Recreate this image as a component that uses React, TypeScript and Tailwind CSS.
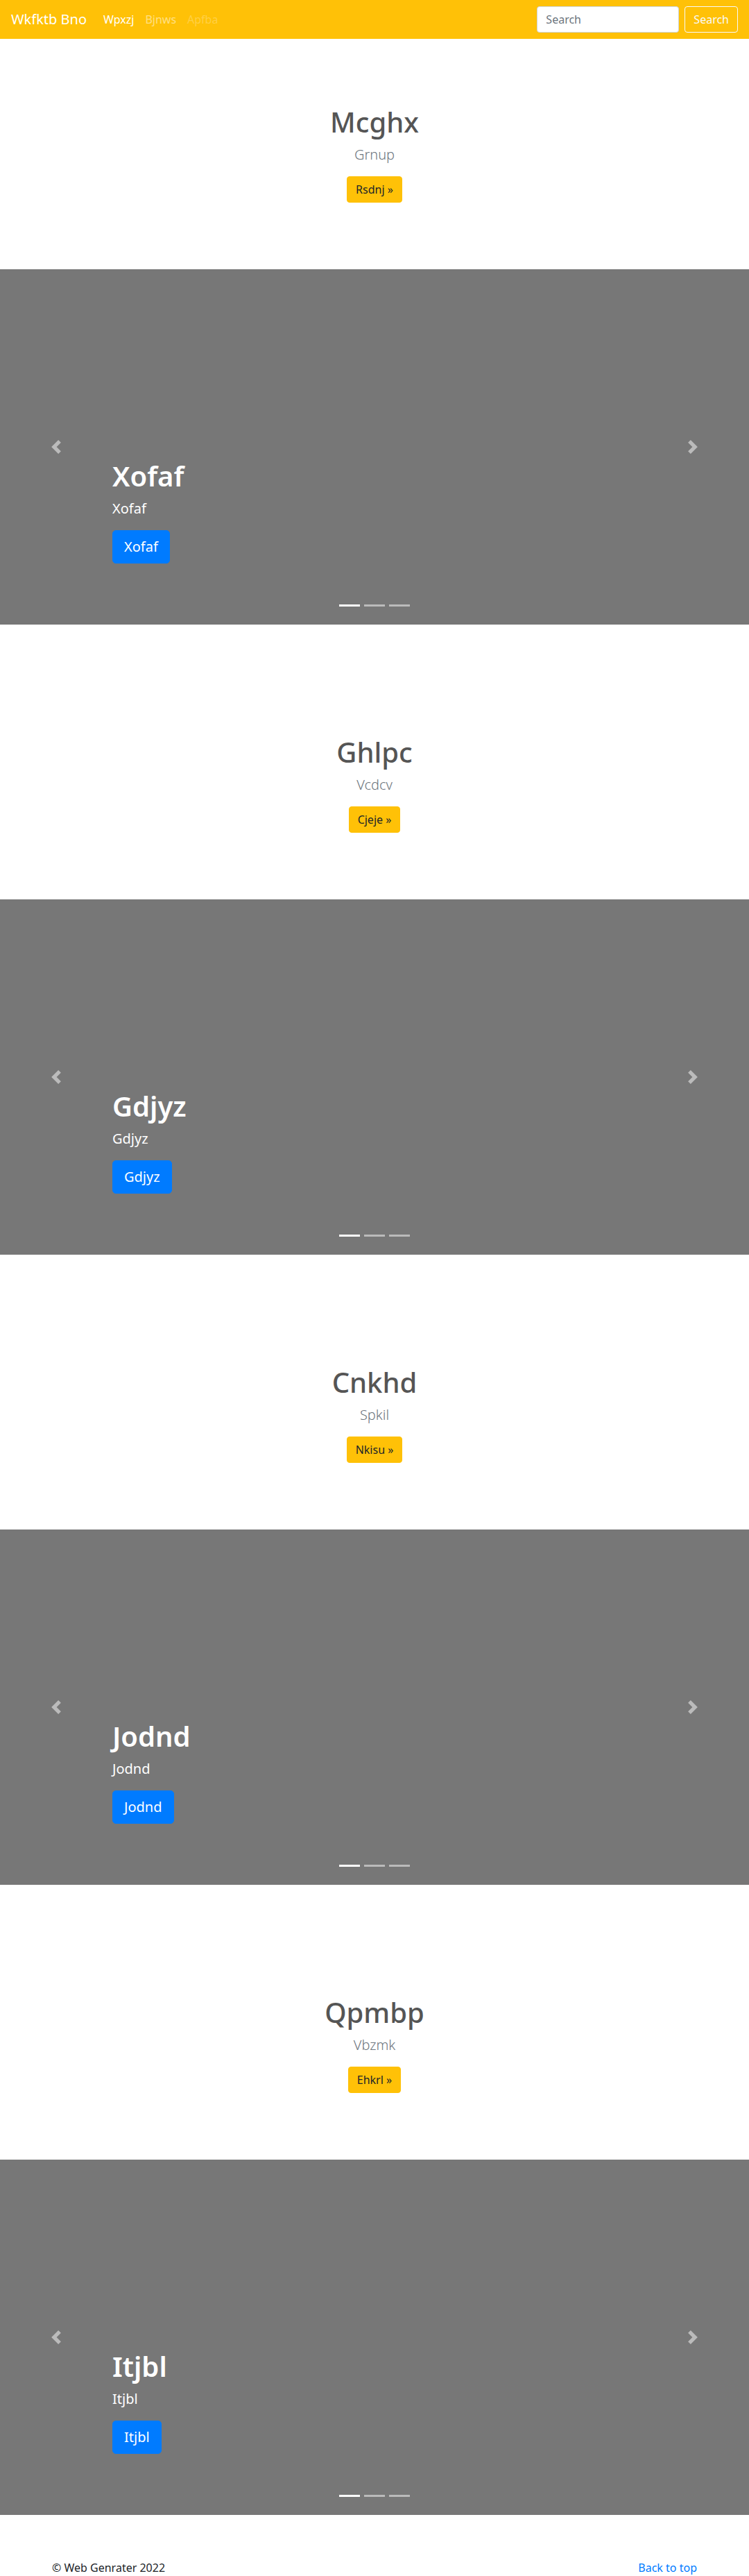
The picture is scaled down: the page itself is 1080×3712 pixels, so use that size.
const font = { fontFamily: '"Noto Sans", "Open Sans", Arial, sans-serif' };

const sections = [
  { title: "Mcghx", lead: "Grnup", cta: "Rsdnj", slide: "Xofaf" },
  { title: "Ghlpc", lead: "Vcdcv", cta: "Cjeje", slide: "Gdjyz" },
  { title: "Cnkhd", lead: "Spkil", cta: "Nkisu", slide: "Jodnd" },
  { title: "Qpmbp", lead: "Vbzmk", cta: "Ehkrl", slide: "Itjbl" },
];

function Navbar() {
  return (
    <nav className="flex h-14 items-center bg-[#ffc107] px-4">
      <a href="#" className="mr-4 py-[5px] text-[20px] leading-[30px] text-white">
        Wkfktb Bno
      </a>
      <ul className="flex items-center text-[16px] leading-6">
        <li>
          <a href="#" className="block px-2 py-2 text-white">
            Wpxzj
          </a>
        </li>
        <li>
          <a href="#" className="block px-2 py-2 text-white/50">
            Bjnws
          </a>
        </li>
        <li>
          <span className="block px-2 py-2 text-white/25">Apfba</span>
        </li>
      </ul>
      <form className="ml-auto flex items-center gap-2" onSubmit={(e) => e.preventDefault()}>
        <input
          type="text"
          placeholder="Search"
          className="h-[38px] w-[205px] rounded border border-[#ced4da] bg-white px-3 text-[16px] text-[#495057] placeholder:text-[#6c757d] outline-none"
        />
        <button
          type="submit"
          className="h-[38px] rounded border border-[#f8f9fa] px-3 text-[16px] text-[#f8f9fa]"
        >
          Search
        </button>
      </form>
    </nav>
  );
}

function Hero({ title, lead, cta }: { title: string; lead: string; cta: string }) {
  return (
    <section className="bg-white py-24 text-center">
      <h1 className="mb-2 text-[40px] font-medium leading-[48px] text-[#555]">{title}</h1>
      <p className="mb-4 text-[20px] font-light leading-[30px] text-[#6c757d]">{lead}</p>
      <p>
        <a
          href="#"
          className="inline-block rounded border border-[#ffc107] bg-[#ffc107] px-3 py-1.5 text-[16px] leading-6 text-[#212529]"
        >
          {cta} »
        </a>
      </p>
    </section>
  );
}

function Chevron({ dir }: { dir: "prev" | "next" }) {
  const d =
    dir === "prev"
      ? "M5.25 0l-4 4 4 4 1.5-1.5L4.25 4l2.5-2.5L5.25 0z"
      : "M2.75 0l-1.5 1.5L3.75 4l-2.5 2.5L2.75 8l4-4-4-4z";
  return (
    <svg width="20" height="20" viewBox="0 0 8 8" className="opacity-50">
      <path d={d} fill="#fff" />
    </svg>
  );
}

function Carousel({ label }: { label: string }) {
  return (
    <div className="relative mb-16 h-[512px] bg-[#777]">
      <div className="absolute bottom-[88px] left-[15%] right-[15%] text-left text-white">
        <h1 className="mb-2 text-[40px] font-semibold leading-[48px]">{label}</h1>
        <p className="mb-4 text-[20px] leading-[30px]">{label}</p>
        <p>
          <a
            href="#"
            className="inline-block rounded-[5px] border border-[#007bff] bg-[#007bff] px-4 py-2 text-[20px] leading-[30px] text-white"
          >
            {label}
          </a>
        </p>
      </div>
      <ol className="absolute bottom-[26px] left-0 right-0 flex justify-center">
        {[0, 1, 2].map((i) => (
          <li key={i} className={`mx-[3px] h-[3px] w-[30px] ${i === 0 ? "bg-white" : "bg-white/50"}`} />
        ))}
      </ol>
      <a href="#" className="absolute bottom-0 left-0 top-0 flex w-[15%] items-center justify-center">
        <Chevron dir="prev" />
      </a>
      <a href="#" className="absolute bottom-0 right-0 top-0 flex w-[15%] items-center justify-center">
        <Chevron dir="next" />
      </a>
    </div>
  );
}

export default function App() {
  return (
    <div style={font} className="min-h-screen bg-white text-[#212529]">
      <Navbar />
      <main>
        {sections.map((s) => (
          <div key={s.title}>
            <Hero title={s.title} lead={s.lead} cta={s.cta} />
            <Carousel label={s.slide} />
          </div>
        ))}
      </main>
      <footer className="mx-auto max-w-[960px] px-[15px] text-[16px] leading-6">
        <p className="float-right">
          <a href="#" className="text-[#007bff]">
            Back to top
          </a>
        </p>
        <p>© Web Genrater 2022</p>
      </footer>
    </div>
  );
}
